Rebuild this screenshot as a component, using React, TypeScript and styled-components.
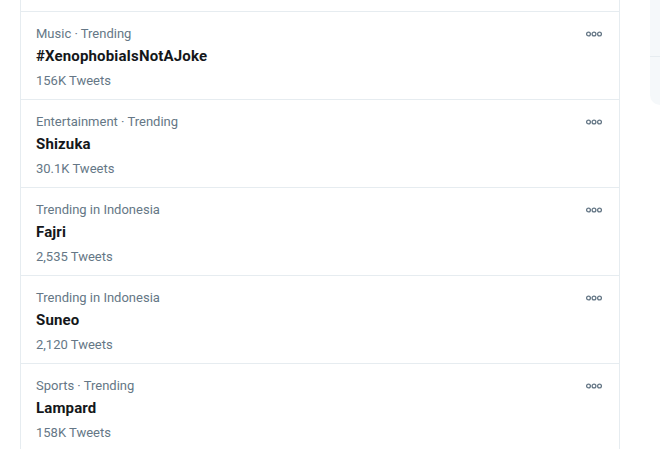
import React from "react";
import styled, { createGlobalStyle } from "styled-components";

const GlobalStyle = createGlobalStyle`
  body {
    margin: 0;
    background: #fff;
    font-family: Roboto, "Liberation Sans", sans-serif;
    overflow: hidden;
  }
`;

const Page = styled.div`
  display: flex;
  align-items: flex-start;
  padding-left: 20px;
  height: 449px;
`;

const Column = styled.div`
  width: 600px;
  border-left: 1px solid #e6ecf0;
  border-right: 1px solid #e6ecf0;
  box-sizing: border-box;
  min-height: 449px;
`;

const Cut = styled.div`
  height: 11px;
  border-bottom: 1px solid #e6ecf0;
`;

const Item = styled.div`
  display: flex;
  justify-content: space-between;
  padding: 12px 17px 8px 15px;
  border-bottom: 1px solid #e6ecf0;
`;

const Meta = styled.div`
  font-size: 13px;
  line-height: 20px;
  color: #657786;
`;

const Title = styled.div`
  margin-top: 2px;
  font-size: 15px;
  line-height: 20px;
  font-weight: 700;
  letter-spacing: 0.15px;
  color: #14171a;
`;

const Count = styled(Meta)`
  margin-top: 5px;
`;

const More = styled.div`
  width: 16px;
  height: 20px;
  display: flex;
  align-items: center;
  justify-content: center;
  color: #657786;
`;

const Side = styled.div`
  margin-left: 30px;
  flex: 1;
  height: 105px;
  background: #f5f8fa;
  border-radius: 0 0 0 14px;
`;

const SideRow = styled.div`
  height: 56px;
  border-bottom: 1px solid #e6ecf0;
`;

const Dots = () => (
  <svg width="16" height="6" viewBox="0 0 16 6">
    {[2.5, 8, 13.5].map(x => (
      <circle key={x} cx={x} cy="3" r="1.9" fill="none" stroke="currentColor" strokeWidth="1.3" />
    ))}
  </svg>
);

const trends = [
  { meta: "Music · Trending", name: "#XenophobiaIsNotAJoke", count: "156K Tweets" },
  { meta: "Entertainment · Trending", name: "Shizuka", count: "30.1K Tweets" },
  { meta: "Trending in Indonesia", name: "Fajri", count: "2,535 Tweets" },
  { meta: "Trending in Indonesia", name: "Suneo", count: "2,120 Tweets" },
  { meta: "Sports · Trending", name: "Lampard", count: "158K Tweets" },
];

export default function App() {
  return (
    <>
      <GlobalStyle />
      <Page>
        <Column>
          <Cut />
          {trends.map(t => (
            <Item key={t.name}>
              <div>
                <Meta>{t.meta}</Meta>
                <Title>{t.name}</Title>
                <Count>{t.count}</Count>
              </div>
              <More><Dots /></More>
            </Item>
          ))}
        </Column>
        <Side>
          <SideRow />
        </Side>
      </Page>
    </>
  );
}
